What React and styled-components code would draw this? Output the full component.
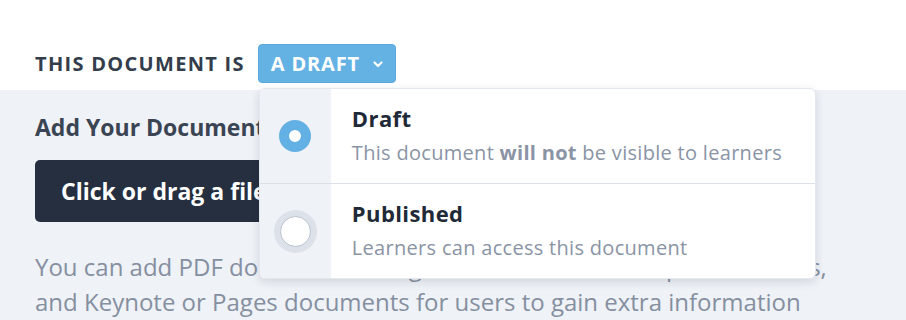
import styled, { createGlobalStyle } from "styled-components";

const GlobalStyle = createGlobalStyle`
  body {
    margin: 0;
    font-family: "Open Sans", "Lato", sans-serif;
    background: #ffffff;
  }
`;

const options = [
  {
    id: "draft",
    title: "Draft",
    description: (
      <>
        This document <strong>will not</strong> be visible to learners
      </>
    ),
  },
  {
    id: "published",
    title: "Published",
    description: "Learners can access this document",
  },
];

const Chevron = () => (
  <svg width="12" height="12" viewBox="0 0 12 12" fill="none">
    <path
      d="M2.5 4.5 L6 8 L9.5 4.5"
      stroke="#ffffff"
      strokeWidth="2.2"
      strokeLinecap="round"
      strokeLinejoin="round"
    />
  </svg>
);

const App = () => {
  const status = "draft";

  return (
    <Page>
      <GlobalStyle />
      <Header>
        <HeaderLabel>This document is</HeaderLabel>
        <StatusWrap>
          <StatusButton type="button">
            A Draft <Chevron />
          </StatusButton>
          <Menu>
            {options.map(({ id, title, description }) => (
              <MenuItem key={id}>
                <RadioCell>
                  <Radio $checked={status === id} />
                </RadioCell>
                <ItemText>
                  <ItemTitle>{title}</ItemTitle>
                  <ItemDescription>{description}</ItemDescription>
                </ItemText>
              </MenuItem>
            ))}
          </Menu>
        </StatusWrap>
      </Header>
      <Body>
        <SectionTitle>Add Your Document</SectionTitle>
        <UploadButton type="button">Click or drag a file here to upload</UploadButton>
        <HelpText>
          You can add PDF documents, images, audio, video, slide presentations,
          <br />
          and Keynote or Pages documents for users to gain extra information
        </HelpText>
      </Body>
    </Page>
  );
};

export default App;

const Page = styled.div`
  width: 906px;
  height: 320px;
  overflow: hidden;
`;

const Header = styled.div`
  height: 90px;
  padding: 44px 35px 0;
  box-sizing: border-box;
  display: flex;
  align-items: flex-start;
  gap: 13px;
  background: #ffffff;
`;

const HeaderLabel = styled.h2`
  margin: 0;
  height: 39px;
  display: flex;
  align-items: center;
  font-size: 20px;
  font-weight: 700;
  letter-spacing: 1.3px;
  text-transform: uppercase;
  color: #333d4b;
`;

const StatusWrap = styled.div`
  position: relative;
`;

const StatusButton = styled.button`
  height: 39px;
  padding: 0 11px 0 12px;
  display: flex;
  align-items: center;
  gap: 12px;
  border: 1px solid #5aa9de;
  border-radius: 4px;
  background: #64b1e4;
  color: #ffffff;
  font-family: "Open Sans", sans-serif;
  font-size: 20px;
  font-weight: 700;
  letter-spacing: 0.8px;
  text-transform: uppercase;
  cursor: pointer;
`;

const Menu = styled.div`
  position: absolute;
  top: 44px;
  left: 1px;
  z-index: 2;
  width: 555px;
  background: #ffffff;
  border: 1px solid #e3e7ee;
  border-radius: 6px;
  overflow: hidden;
  box-shadow: 0 3px 10px rgba(30, 40, 60, 0.14);
`;

const MenuItem = styled.div`
  display: flex;
  height: 94px;

  & + & {
    border-top: 1px solid #dbdfe8;
  }
`;

const RadioCell = styled.div`
  width: 71px;
  flex-shrink: 0;
  display: flex;
  align-items: center;
  justify-content: center;
  background: #eff2f7;
`;

const Radio = styled.span`
  box-sizing: border-box;
  border-radius: 50%;
  background: #ffffff;
  ${({ $checked }) =>
    $checked
      ? `
    width: 32px;
    height: 32px;
    border: 10px solid #63b1e4;
  `
      : `
    width: 31px;
    height: 31px;
    border: 1.5px solid #b9c1cd;
    box-shadow: 0 0 0 6px #dde2ea;
  `}
`;

const ItemText = styled.div`
  padding: 14px 21px 0;
  display: flex;
  flex-direction: column;
  gap: 7px;
`;

const ItemTitle = styled.div`
  font-size: 22px;
  font-weight: 700;
  letter-spacing: 0.4px;
  color: #1f2937;
  line-height: 30px;
`;

const ItemDescription = styled.div`
  font-size: 20px;
  letter-spacing: 0.3px;
  color: #8a94a5;
  line-height: 26px;

  strong {
    font-weight: 700;
  }
`;

const Body = styled.div`
  height: 230px;
  padding: 23px 35px 0;
  box-sizing: border-box;
  background: #eff2f7;
`;

const SectionTitle = styled.h3`
  margin: 0 0 19px;
  font-size: 23px;
  font-weight: 700;
  color: #3a4452;
  line-height: 28px;
`;

const UploadButton = styled.button`
  height: 62px;
  padding: 0 26px;
  border: none;
  border-radius: 5px;
  background: #252f40;
  color: #ffffff;
  font-family: "Open Sans", sans-serif;
  font-size: 23px;
  font-weight: 700;
  cursor: pointer;
`;

const HelpText = styled.p`
  margin: 27px 0 0;
  font-size: 24px;
  line-height: 35px;
  color: #858fa0;
  white-space: nowrap;
`;
